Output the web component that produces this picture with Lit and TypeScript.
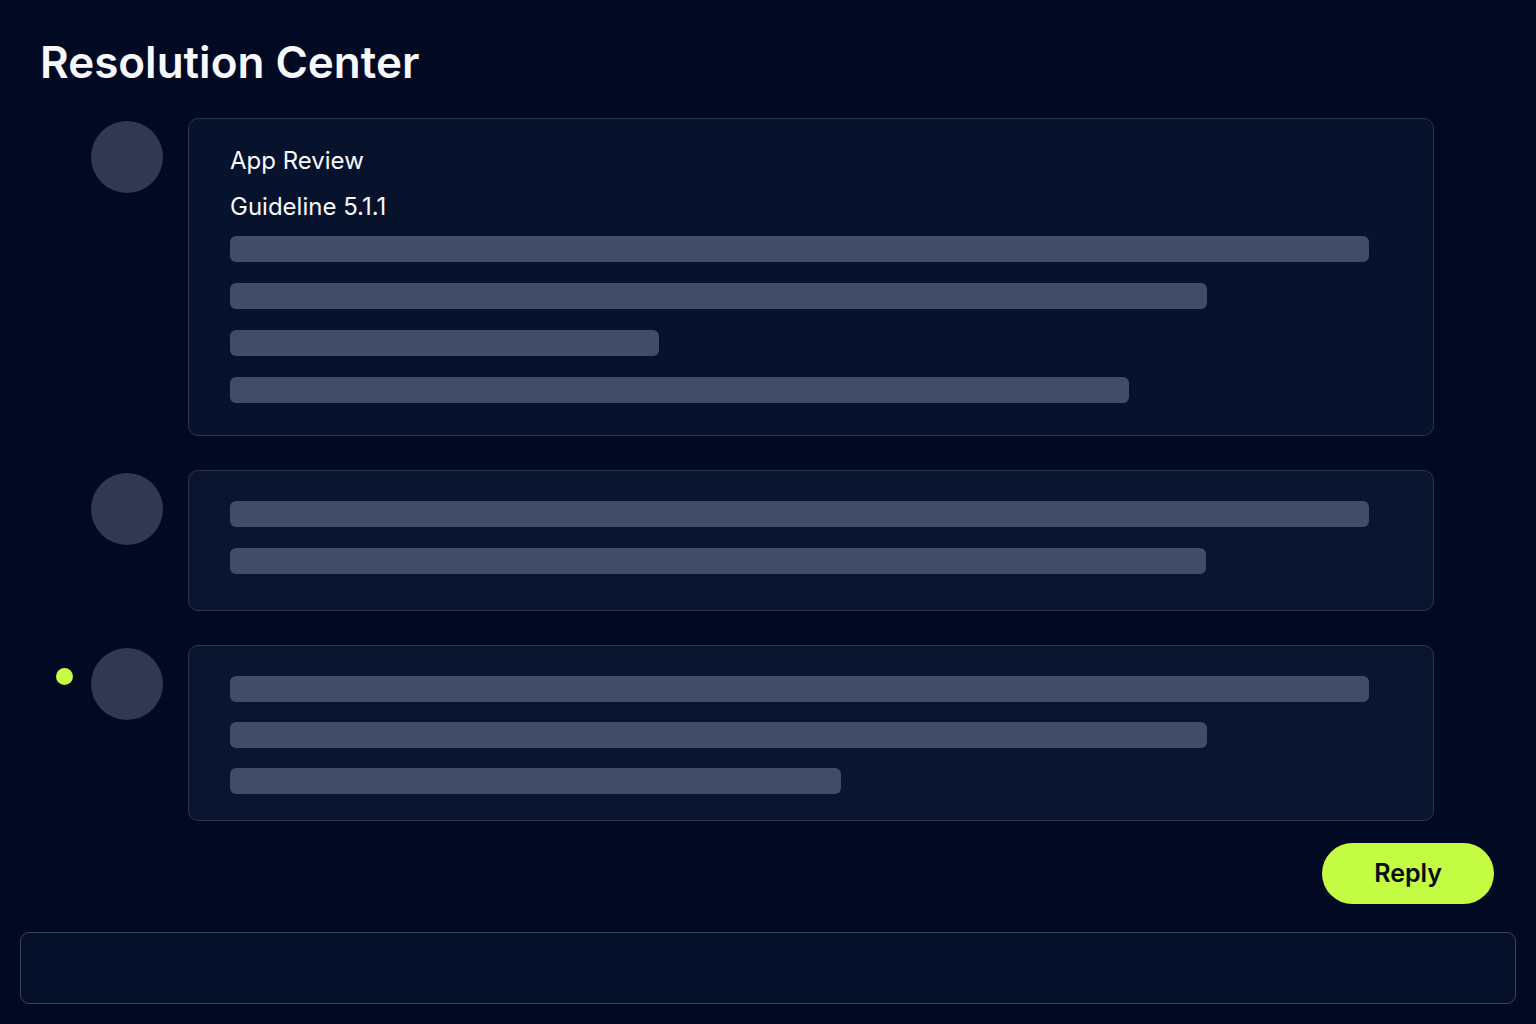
import { LitElement, html, css, nothing } from "lit";
import { customElement, property } from "lit/decorators.js";
import { classMap } from "lit/directives/class-map.js";
import { styleMap } from "lit/directives/style-map.js";

interface Message {
  author?: string;
  subject?: string;
  unread?: boolean;
  size: "full" | "medium" | "compact";
  /** Placeholder line widths, in percent of the card's content width. */
  lines: number[];
}

const MESSAGES: Message[] = [
  { author: "App Review", subject: "Guideline 5.1.1", size: "full", lines: [100, 85.8, 37.7, 78.9] },
  { size: "medium", lines: [100, 85.7] },
  { unread: true, size: "compact", lines: [100, 85.8, 53.6] },
];

@customElement("message-row")
export class MessageRow extends LitElement {
  @property({ attribute: false }) message!: Message;

  static styles = css`
    :host {
      display: block;
    }
    .row {
      display: grid;
      grid-template-columns: 17px 72px minmax(0, 1fr);
      column-gap: 18px;
      align-items: start;
    }
    .dot {
      width: 17px;
      height: 17px;
      margin-top: 23px;
      border-radius: 50%;
      background: #c3fc42;
    }
    .avatar {
      grid-column: 2;
      width: 72px;
      height: 72px;
      margin-top: 3px;
      border-radius: 50%;
      background: #323852;
    }
    .card {
      grid-column: 3;
      box-sizing: border-box;
      margin-left: 7px;
      padding: 30px 64px 32px 41px;
      border: 1px solid #2c3450;
      border-radius: 10px;
      background: #07122c;
    }
    .medium {
      padding-bottom: 36px;
      background: #0a152f;
    }
    .compact {
      padding-bottom: 26px;
      background: #0a152f;
    }
    .heading {
      display: grid;
      row-gap: 22px;
      margin-bottom: 17px;
    }
    .author,
    .subject {
      margin: 0;
      font-size: 24px;
      font-weight: 400;
      line-height: 24px;
      color: #f8f9ff;
    }
    .lines {
      display: grid;
      row-gap: 21px;
    }
    .compact .lines {
      row-gap: 20px;
    }
    .line {
      height: 26px;
      border-radius: 6px;
      background: #434c67;
    }
  `;

  render() {
    const m = this.message;
    return html`
      <article class="row">
        ${m.unread ? html`<span class="dot" role="img" aria-label="Unread"></span>` : nothing}
        <div class="avatar"></div>
        <div class=${classMap({ card: true, [m.size]: true })}>
          ${m.author
            ? html`<header class="heading">
                <h2 class="author">${m.author}</h2>
                <p class="subject">${m.subject}</p>
              </header>`
            : nothing}
          <div class="lines">
            ${m.lines.map((w) => html`<div class="line" style=${styleMap({ width: `${w}%` })}></div>`)}
          </div>
        </div>
      </article>
    `;
  }
}

@customElement("app-root")
export class AppRoot extends LitElement {
  static styles = css`
    :host {
      display: block;
      font-family: Inter, "Liberation Sans", sans-serif;
      background: #010923;
    }
    .page {
      box-sizing: border-box;
      display: flex;
      flex-direction: column;
      min-height: 100vh;
      padding: 34px 20px 20px;
    }
    .title {
      margin: 0 20px;
      font-size: 44px;
      font-weight: 600;
      line-height: 56px;
      color: #f8f8ff;
    }
    .thread {
      display: grid;
      row-gap: 34px;
      margin: 28px 82px 0 36px;
    }
    .form {
      display: flex;
      flex-direction: column;
      flex: 1;
      row-gap: 28px;
      margin-top: 22px;
    }
    .reply {
      align-self: flex-end;
      margin-right: 22px;
      padding: 0 52px;
      border: 0;
      border-radius: 31px;
      background: #c3fc42;
      color: #060b14;
      font: 600 25px/61px Inter, "Liberation Sans", sans-serif;
      cursor: pointer;
    }
    .composer {
      box-sizing: border-box;
      display: block;
      flex: 1;
      width: 100%;
      min-height: 72px;
      padding: 20px 24px;
      border: 1px solid #3a415c;
      border-radius: 9px;
      outline: none;
      resize: none;
      background: #041029;
      color: #f8f9ff;
      font: 400 24px/30px Inter, "Liberation Sans", sans-serif;
    }
    .composer:focus-visible {
      border-color: #c3fc42;
    }
  `;

  render() {
    return html`
      <main class="page">
        <h1 class="title">Resolution Center</h1>
        <section class="thread">
          ${MESSAGES.map((m) => html`<message-row .message=${m}></message-row>`)}
        </section>
        <form class="form" @submit=${(e: Event) => e.preventDefault()}>
          <button class="reply" type="submit">Reply</button>
          <textarea class="composer" rows="1" aria-label="Message"></textarea>
        </form>
      </main>
    `;
  }
}
